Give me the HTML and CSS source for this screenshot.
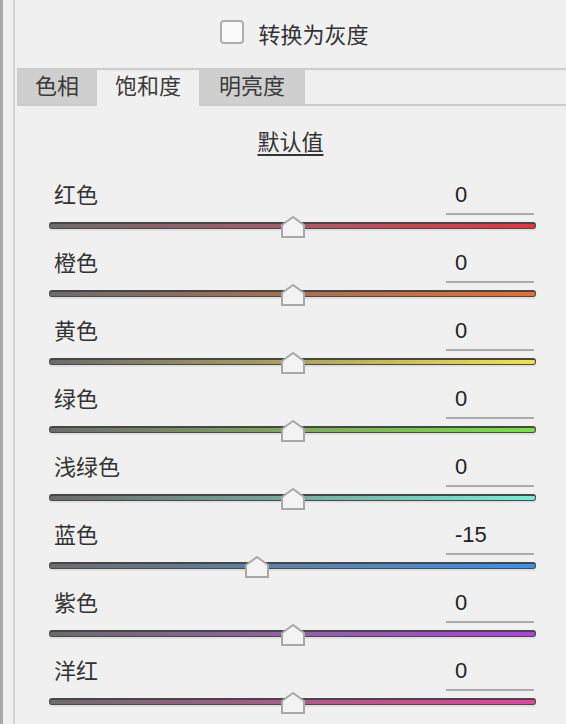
FILE: index.html
```html
<!DOCTYPE html>
<html lang="zh-CN">

<head>
    <meta charset="UTF-8" />
    <title>色相/饱和度</title>
    <link rel="stylesheet" href="styles.css">
</head>

<body>

    <div class="frame">
        <div class="panel">
            <!-- Case à cocher -->
            <label class="gray-row">
                <span class="checkbox"></span>
                <span class="gray-text">转换为灰度</span>
            </label>

            <!-- Onglets -->
            <div class="tabs">
                <div class="tab tab-hue">色相</div>
                <div class="tab tab-sat active">饱和度</div>
                <div class="tab tab-lum">明亮度</div>
            </div>

            <div class="defaults"><span>默认值</span></div>

            <div class="sliders">
                <div class="row">
                    <div class="row-head"><span class="label">红色</span><span class="value">0</span></div>
                    <div class="track red"><svg class="thumb" style="left: 231px" width="24" height="22" viewBox="0 0 24 22"><polygon points="1,9 12,1 23,9 23,21 1,21" /></svg></div>
                </div>
                <div class="row">
                    <div class="row-head"><span class="label">橙色</span><span class="value">0</span></div>
                    <div class="track orange"><svg class="thumb" style="left: 231px" width="24" height="22" viewBox="0 0 24 22"><polygon points="1,9 12,1 23,9 23,21 1,21" /></svg></div>
                </div>
                <div class="row">
                    <div class="row-head"><span class="label">黄色</span><span class="value">0</span></div>
                    <div class="track yellow"><svg class="thumb" style="left: 231px" width="24" height="22" viewBox="0 0 24 22"><polygon points="1,9 12,1 23,9 23,21 1,21" /></svg></div>
                </div>
                <div class="row">
                    <div class="row-head"><span class="label">绿色</span><span class="value">0</span></div>
                    <div class="track green"><svg class="thumb" style="left: 231px" width="24" height="22" viewBox="0 0 24 22"><polygon points="1,9 12,1 23,9 23,21 1,21" /></svg></div>
                </div>
                <div class="row">
                    <div class="row-head"><span class="label">浅绿色</span><span class="value">0</span></div>
                    <div class="track aqua"><svg class="thumb" style="left: 231px" width="24" height="22" viewBox="0 0 24 22"><polygon points="1,9 12,1 23,9 23,21 1,21" /></svg></div>
                </div>
                <div class="row">
                    <div class="row-head"><span class="label">蓝色</span><span class="value">-15</span></div>
                    <div class="track blue"><svg class="thumb" style="left: 195px" width="24" height="22" viewBox="0 0 24 22"><polygon points="1,9 12,1 23,9 23,21 1,21" /></svg></div>
                </div>
                <div class="row">
                    <div class="row-head"><span class="label">紫色</span><span class="value">0</span></div>
                    <div class="track purple"><svg class="thumb" style="left: 231px" width="24" height="22" viewBox="0 0 24 22"><polygon points="1,9 12,1 23,9 23,21 1,21" /></svg></div>
                </div>
                <div class="row">
                    <div class="row-head"><span class="label">洋红</span><span class="value">0</span></div>
                    <div class="track magenta"><svg class="thumb" style="left: 231px" width="24" height="22" viewBox="0 0 24 22"><polygon points="1,9 12,1 23,9 23,21 1,21" /></svg></div>
                </div>
            </div>
        </div>
    </div>

</body>

</html>
```

FILE: styles.css
```css
body {
    margin: 0;
    background: #f0f0f0;
    font-family: "Liberation Sans", "Noto Sans CJK SC", sans-serif;
    font-size: 22px;
    color: #333;
    height: 724px;
    overflow: hidden;
}

.frame {
    border-left: 3px solid #a9a9a9;
    height: 100%;
}

.panel {
    margin-left: 10px;
    border-left: 2px solid #d4d4d4;
    height: 100%;
}

/* Ligne "convertir en gris" */
.gray-row {
    display: flex;
    justify-content: center;
    align-items: center;
    gap: 14px;
    height: 68px;
    padding-left: 8px;
}

.checkbox {
    width: 24px;
    height: 24px;
    box-sizing: border-box;
    border: 2px solid #adadad;
    border-radius: 4px;
    background: #fafafa;
    margin-top: -4px;
}

.gray-text {
    margin-top: -3px;
}

/* Onglets */
.tabs {
    display: flex;
    margin-left: 2px;
    height: 34px;
    border-top: 2px solid #cbcbcb;
    border-bottom: 2px solid #cbcbcb;
}

.tab {
    background: #cfcfcf;
    line-height: 34px;
    text-align: center;
    color: #3a3a3a;
}

.tab-hue {
    width: 80px;
}

.tab-sat {
    width: 102px;
}

.tab-lum {
    width: 106px;
}

.tab.active {
    background: #f0f0f0;
    height: 36px;
}

.defaults {
    text-align: center;
    padding-top: 22px;
    height: 50px;
    line-height: 30px;
}

.defaults span {
    text-decoration: underline;
    text-underline-offset: 4px;
}

/* Curseurs */
.sliders {
    padding: 0 30px 0 34px;
}

.row {
    height: 68px;
}

.row-head {
    display: flex;
    justify-content: space-between;
    height: 37px;
}

.label {
    margin-left: 5px;
    line-height: 36px;
}

.value {
    width: 88px;
    box-sizing: border-box;
    margin-right: 2px;
    padding-left: 9px;
    line-height: 34px;
    border-bottom: 2px solid #ababab;
    color: #222;
}

.track {
    position: relative;
    margin-top: 7px;
    height: 4px;
    border: 1px solid #474747;
    border-top-width: 2px;
    border-radius: 3px;
    box-shadow: 0 2px 0 #e1e1e1;
}

.thumb {
    position: absolute;
    top: -8px;
}

.thumb polygon {
    fill: #f3f3f3;
    stroke: #a8a8a8;
    stroke-width: 2;
}

.red {
    background: linear-gradient(to right, #6c6c6c, #ad5a66 50%, #ea333c);
}

.orange {
    background: linear-gradient(to right, #6c6c6c, #ab6e4e 50%, #e8702e);
}

.yellow {
    background: linear-gradient(to right, #6c6c6c, #aea45a 50%, #f2e444);
}

.green {
    background: linear-gradient(to right, #6c6c6c, #7ea85a 50%, #72e43e);
}

.aqua {
    background: linear-gradient(to right, #6c6c6c, #74ae9e 50%, #72f2d4);
}

.blue {
    background: linear-gradient(to right, #6c6c6c, #5a84b0 50%, #3890f0);
}

.purple {
    background: linear-gradient(to right, #6c6c6c, #9460aa 50%, #b040e2);
}

.magenta {
    background: linear-gradient(to right, #6c6c6c, #ae5a88 50%, #ea409c);
}
```
